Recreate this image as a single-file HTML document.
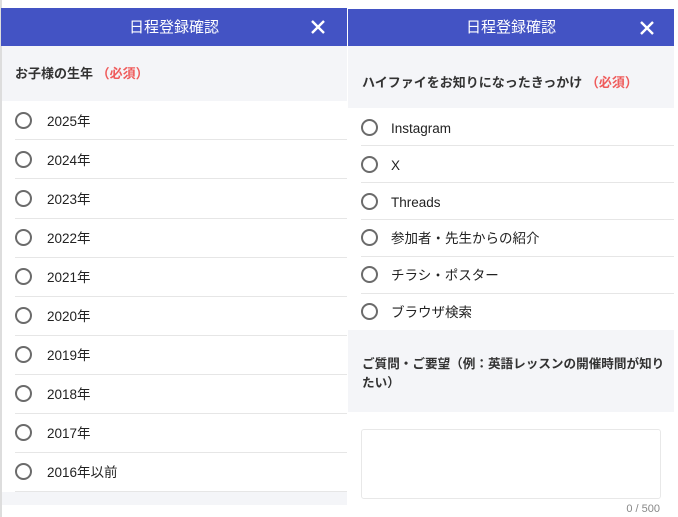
<!DOCTYPE html>
<html><head><meta charset="utf-8"><style>
*{margin:0;padding:0;box-sizing:border-box}
body{width:678px;height:517px;background:#fff;position:relative;overflow:hidden;font-family:"Liberation Sans","Noto Sans CJK JP",sans-serif;color:#222}
.a{position:absolute}
.hd{background:#4353c4;color:#fff;font-size:15px;text-align:center;line-height:39px}
.gray{background:#f4f5f8}
.lbl{font-size:13px;font-weight:bold;color:#333}
.req{color:#ef5b5b}
.r{position:absolute;width:17px;height:17px;border:2px solid #6b6b6b;border-radius:50%}
.t{position:absolute;font-size:13.5px;line-height:16px;color:#222}
.d{position:absolute;height:1px;background:#e6e6e6}
</style></head><body>
<div class="a" style="left:0;top:0;width:2px;height:517px;background:#ddd"></div>
<div class="a hd" style="left:1px;top:8px;width:346px;height:38px">日程登録確認
<svg class="a" style="left:310px;top:12px" width="14" height="14" viewBox="0 0 14 14"><path d="M1 1L13 13M13 1L1 13" stroke="#fff" stroke-width="2.4"/></svg></div>
<div class="a gray" style="left:2px;top:46px;width:345px;height:55px"></div>
<div class="a lbl" style="left:15px;top:63px">お子様の生年 <span class="req">（必須）</span></div>
<div class="a gray" style="left:2px;top:492px;width:345px;height:13px"></div>
<div class="r" style="left:15px;top:112px"></div><div class="t" style="left:47px;top:114px">2025年</div><div class="d" style="left:15px;top:139px;width:332px"></div>
<div class="r" style="left:15px;top:151px"></div><div class="t" style="left:47px;top:153px">2024年</div><div class="d" style="left:15px;top:178px;width:332px"></div>
<div class="r" style="left:15px;top:190px"></div><div class="t" style="left:47px;top:192px">2023年</div><div class="d" style="left:15px;top:218px;width:332px"></div>
<div class="r" style="left:15px;top:229px"></div><div class="t" style="left:47px;top:231px">2022年</div><div class="d" style="left:15px;top:257px;width:332px"></div>
<div class="r" style="left:15px;top:268px"></div><div class="t" style="left:47px;top:270px">2021年</div><div class="d" style="left:15px;top:296px;width:332px"></div>
<div class="r" style="left:15px;top:307px"></div><div class="t" style="left:47px;top:309px">2020年</div><div class="d" style="left:15px;top:335px;width:332px"></div>
<div class="r" style="left:15px;top:346px"></div><div class="t" style="left:47px;top:348px">2019年</div><div class="d" style="left:15px;top:374px;width:332px"></div>
<div class="r" style="left:15px;top:385px"></div><div class="t" style="left:47px;top:387px">2018年</div><div class="d" style="left:15px;top:413px;width:332px"></div>
<div class="r" style="left:15px;top:424px"></div><div class="t" style="left:47px;top:426px">2017年</div><div class="d" style="left:15px;top:452px;width:332px"></div>
<div class="r" style="left:15px;top:463px"></div><div class="t" style="left:47px;top:465px">2016年以前</div><div class="d" style="left:15px;top:491px;width:332px"></div>
<div class="a hd" style="left:348px;top:9px;width:326px;height:37px;line-height:37px">日程登録確認
<svg class="a" style="left:292px;top:12px" width="14" height="14" viewBox="0 0 14 14"><path d="M1 1L13 13M13 1L1 13" stroke="#fff" stroke-width="2.4"/></svg></div>
<div class="a gray" style="left:348px;top:46px;width:326px;height:62px"></div>
<div class="a lbl" style="left:362px;top:72px">ハイファイをお知りになったきっかけ <span class="req">（必須）</span></div>
<div class="r" style="left:361px;top:119px"></div><div class="t" style="left:391px;top:121px">Instagram</div><div class="d" style="left:361px;top:145px;width:313px"></div>
<div class="r" style="left:361px;top:156px"></div><div class="t" style="left:391px;top:158px">X</div><div class="d" style="left:361px;top:182px;width:313px"></div>
<div class="r" style="left:361px;top:193px"></div><div class="t" style="left:391px;top:195px">Threads</div><div class="d" style="left:361px;top:219px;width:313px"></div>
<div class="r" style="left:361px;top:229px"></div><div class="t" style="left:391px;top:231px">参加者・先生からの紹介</div><div class="d" style="left:361px;top:256px;width:313px"></div>
<div class="r" style="left:361px;top:266px"></div><div class="t" style="left:391px;top:268px">チラシ・ポスター</div><div class="d" style="left:361px;top:293px;width:313px"></div>
<div class="r" style="left:361px;top:303px"></div><div class="t" style="left:391px;top:305px">ブラウザ検索</div>
<div class="a gray" style="left:348px;top:330px;width:326px;height:82px"></div>
<div class="a lbl" style="left:362px;top:355px;width:310px;line-height:19px;font-size:12.6px">ご質問・ご要望（例：英語レッスンの開催時間が知り<br>たい）</div>
<div class="a" style="left:361px;top:429px;width:300px;height:70px;border:1px solid #e8e8e8;border-radius:3px"></div>
<div class="a" style="left:600px;top:503px;width:60px;text-align:right;font-size:11px;color:#888">0 / 500</div>
</body></html>
